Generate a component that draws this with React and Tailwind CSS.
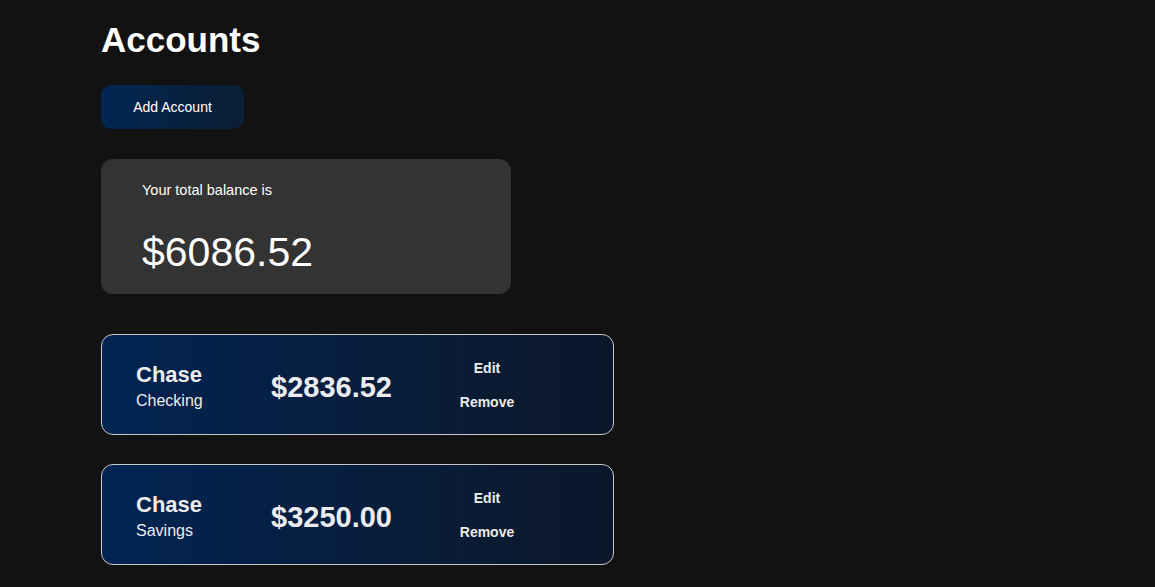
import React from 'react';

const accounts = [
  { id: 1, bank: 'Chase', type: 'Checking', balance: '$2836.52' },
  { id: 2, bank: 'Chase', type: 'Savings', balance: '$3250.00' },
];

// Tarjeta de cuenta
const AccountCard = ({ account }) => (
  <div className="w-[513px] h-[101px] rounded-[12px] border border-[#c8c8c8] bg-gradient-to-r from-[#012453] to-[#0b1729] flex items-center text-[#ececec]">
    <div className="w-[169px] pl-[34px] pt-[4px]">
      <p className="text-[22px] font-semibold leading-[26px]">{account.bank}</p>
      <p className="mt-[3px] text-[16px] leading-[20px]">{account.type}</p>
    </div>
    <div className="w-[166px] text-[29px] font-semibold leading-none pt-[5px]">{account.balance}</div>
    <div className="w-[100px] pt-[2px] flex flex-col items-center gap-[17px] text-[14px] font-semibold">
      <button className="leading-[17px]">Edit</button>
      <button className="leading-[17px]">Remove</button>
    </div>
  </div>
);

export default function App() {
  return (
    <div
      className="min-h-screen bg-[#121212] text-white pl-[101px] pt-[20px]"
      style={{ fontFamily: '"Liberation Sans", Arial, sans-serif' }}
    >
      <h1 className="text-[35px] font-bold leading-[40px]">Accounts</h1>

      <button className="mt-[25px] w-[143px] h-[44px] rounded-[10px] bg-gradient-to-r from-[#002653] to-[#0b1e34] text-[14px] text-white">
        Add Account
      </button>

      <div className="mt-[30px] w-[410px] h-[135px] rounded-[12px] bg-[#333333] pl-[41px] pt-[22px]">
        <p className="text-[14.5px] leading-[18px]">Your total balance is</p>
        <p className="mt-[29px] text-[41px] leading-[48px]">$6086.52</p>
      </div>

      <div className="mt-[40px] flex flex-col gap-[29px]">
        {accounts.map(account => (
          <AccountCard key={account.id} account={account} />
        ))}
      </div>
    </div>
  );
}
